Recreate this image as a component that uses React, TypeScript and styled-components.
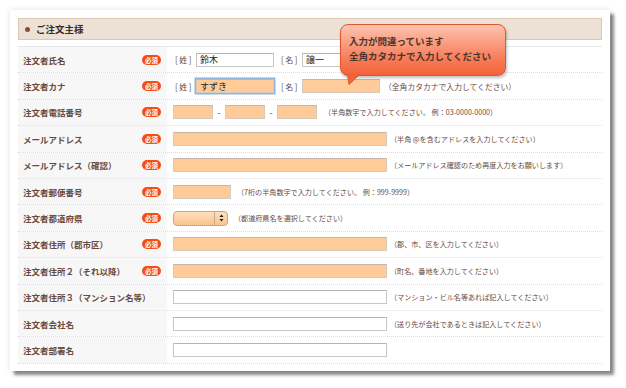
import React from 'react';
import styled, { createGlobalStyle } from 'styled-components';

const GlobalStyle = createGlobalStyle`
  html, body {
    margin: 0;
    padding: 0;
    background: #ffffff;
  }
  body {
    padding: 10px;
    font-family: "Noto Sans CJK JP", "Noto Sans", sans-serif;
  }
`;

const Card = styled.div`
  position: relative;
  width: 600px;
  box-sizing: border-box;
  padding: 8px 8px 7px 8px;
  background: #ffffff;
  box-shadow: 4px 4px 3px rgba(0, 0, 0, 0.45), 0 0 6px rgba(0, 0, 0, 0.12);
`;

const Header = styled.div`
  display: flex;
  align-items: center;
  gap: 6px;
  height: 22px;
  box-sizing: border-box;
  padding-left: 6px;
  background: #ede1d5;
  border: 1px solid #dcc8b6;
  font-size: 9.5px;
  font-weight: 700;
  color: #3b2a20;
`;

const Dot = styled.span`
  width: 5px;
  height: 5px;
  border-radius: 50%;
  background: #8f4c2c;
`;

const Table = styled.div`
  margin-top: 6px;
  border-top: 1px solid #e6e6e6;
`;

const Row = styled.div`
  display: grid;
  grid-template-columns: 149px 1fr;
  height: 25.4px;
  border-bottom: 1px dotted #dcdcdc;
`;

const LabelCell = styled.div`
  display: flex;
  align-items: center;
  justify-content: space-between;
  padding: 0 6px 0 5px;
  background: #f7f7f7;
  font-size: 8.5px;
  font-weight: 700;
  color: #6a4a3c;
`;

const Badge = styled.span`
  display: inline-flex;
  align-items: center;
  justify-content: center;
  width: 19px;
  height: 10px;
  border-radius: 5px;
  background: #f24d12;
  color: #ffffff;
  font-size: 6.5px;
  font-weight: 700;
`;

const FieldCell = styled.div`
  display: flex;
  align-items: center;
  padding-left: 6px;
  font-size: 8px;
  color: #6a4a3c;
`;

const Bracket = styled.span<{ $gap?: number }>`
  display: inline-flex;
  align-items: center;
  width: 19px;
  margin-left: ${p => p.$gap ?? 0}px;
  margin-right: 2px;
  padding-left: 2px;
  font-size: 8px;
  color: #6a4a3c;
  white-space: nowrap;

  & > b {
    font-weight: 400;
    margin: 0 1.5px;
  }
`;

const Input = styled.div<{ $w: number; $req?: boolean; $focus?: boolean }>`
  width: ${p => p.$w}px;
  height: 14px;
  box-sizing: border-box;
  padding-left: 3px;
  display: flex;
  align-items: center;
  background: ${p => (p.$req ? '#ffcc99' : '#ffffff')};
  border: 1px solid ${p => (p.$req ? '#d6c9bd' : '#c6c6c6')};
  border-top-color: ${p => (p.$req ? '#c4b6aa' : '#b4b4b4')};
  box-shadow: ${p => (p.$focus ? '0 0 0 1.5px #8fb4de' : 'none')};
  font-size: 9px;
  color: #222222;
`;

const Dash = styled.span`
  width: 12px;
  text-align: center;
  font-size: 9px;
  color: #6a4a3c;
`;

const Hint = styled.span<{ $gap?: number; $size?: number }>`
  margin-left: ${p => p.$gap ?? 4}px;
  font-size: ${p => p.$size ?? 7.1}px;
  color: #6a4a3c;
  white-space: nowrap;
`;

const Select = styled.div`
  width: 55px;
  height: 15px;
  box-sizing: border-box;
  border-radius: 4px;
  border: 1px solid #c7a68a;
  background: linear-gradient(#ffe0bf, #f8c48f);
  display: flex;
  justify-content: flex-end;
`;

const SelectArrows = styled.div`
  width: 12px;
  border-left: 1px solid #c7a68a;
  display: flex;
  align-items: center;
  justify-content: center;
`;

const Tooltip = styled.div`
  position: absolute;
  left: 330px;
  top: 14px;
  width: 166px;
  height: 52px;
  box-sizing: border-box;
  padding: 9px 0 0 8px;
  border-radius: 8px;
  border: 1px solid #e2542c;
  background: linear-gradient(#fdc3b0, #f77a55 70%, #f4623a);
  box-shadow: 1px 2px 3px rgba(0, 0, 0, 0.25);
  font-size: 9.5px;
  font-weight: 700;
  line-height: 15px;
  color: #4a3530;
`;

const Tail = styled.svg`
  position: absolute;
  left: 6px;
  bottom: -10px;
`;

type Field = {
  label: string;
  req: boolean;
  content: React.ReactNode;
};

const Br = ({ text, gap }: { text: string; gap?: number }) => (
  <Bracket $gap={gap}>
    [<b>{text}</b>]
  </Bracket>
);

const fields: Field[] = [
  {
    label: '注文者氏名',
    req: true,
    content: (
      <>
        <Br text="姓" />
        <Input $w={78}>鈴木</Input>
        <Br text="名" gap={5} />
        <Input $w={78}>譲一</Input>
      </>
    ),
  },
  {
    label: '注文者カナ',
    req: true,
    content: (
      <>
        <Br text="姓" />
        <Input $w={78} $req $focus>すずき</Input>
        <Br text="名" gap={5} />
        <Input $w={78} $req />
        <Hint $gap={4} $size={7.8}>（全角カタカナで入力してください）</Hint>
      </>
    ),
  },
  {
    label: '注文者電話番号',
    req: true,
    content: (
      <>
        <Input $w={40} $req />
        <Dash>-</Dash>
        <Input $w={40} $req />
        <Dash>-</Dash>
        <Input $w={40} $req />
        <Hint $gap={7}>（半角数字で入力してください。 例：03-0000-0000）</Hint>
      </>
    ),
  },
  {
    label: 'メールアドレス',
    req: true,
    content: (
      <>
        <Input $w={214} $req />
        <Hint $gap={3}>（半角 @を含むアドレスを入力してください）</Hint>
      </>
    ),
  },
  {
    label: 'メールアドレス（確認）',
    req: true,
    content: (
      <>
        <Input $w={214} $req />
        <Hint $gap={3}>（メールアドレス確認のため再度入力をお願いします）</Hint>
      </>
    ),
  },
  {
    label: '注文者郵便番号',
    req: true,
    content: (
      <>
        <Input $w={58} $req />
        <Hint $gap={6}>（7桁の半角数字で入力してください。 例：999-9999）</Hint>
      </>
    ),
  },
  {
    label: '注文者都道府県',
    req: true,
    content: (
      <>
        <Select>
          <SelectArrows>
            <svg width="5" height="8" viewBox="0 0 5 8">
              <path d="M2.5 0.5 L4.5 3 L0.5 3 Z M2.5 7.5 L4.5 5 L0.5 5 Z" fill="#222" />
            </svg>
          </SelectArrows>
        </Select>
        <Hint $gap={6}>（都道府県名を選択してください）</Hint>
      </>
    ),
  },
  {
    label: '注文者住所（郡市区）',
    req: true,
    content: (
      <>
        <Input $w={214} $req />
        <Hint $gap={3}>（郡、市、区を入力してください）</Hint>
      </>
    ),
  },
  {
    label: '注文者住所２（それ以降）',
    req: true,
    content: (
      <>
        <Input $w={214} $req />
        <Hint $gap={3}>（町名、番地を入力してください）</Hint>
      </>
    ),
  },
  {
    label: '注文者住所３（マンション名等）',
    req: false,
    content: (
      <>
        <Input $w={214} />
        <Hint $gap={3}>（マンション・ビル名等あれば記入してください）</Hint>
      </>
    ),
  },
  {
    label: '注文者会社名',
    req: false,
    content: (
      <>
        <Input $w={214} />
        <Hint $gap={3}>（送り先が会社であるときは記入してください）</Hint>
      </>
    ),
  },
  {
    label: '注文者部署名',
    req: false,
    content: <Input $w={214} />,
  },
];

const App = () => {
  return (
    <>
      <GlobalStyle />
      <Card>
        <Header>
          <Dot />
          ご注文主様
        </Header>
        <Table>
          {fields.map(f => (
            <Row key={f.label}>
              <LabelCell>
                <span>{f.label}</span>
                {f.req && <Badge>必須</Badge>}
              </LabelCell>
              <FieldCell>{f.content}</FieldCell>
            </Row>
          ))}
        </Table>
        <Tooltip>
          入力が間違っています
          <br />
          全角カタカナで入力してください
          <Tail width="14" height="11" viewBox="0 0 14 11">
            <path d="M0.5 0 L2 10.5 L13 0" fill="#f4623a" stroke="#e2542c" strokeWidth="1" />
            <rect x="1" y="-1" width="12" height="1.6" fill="#f4623a" />
          </Tail>
        </Tooltip>
      </Card>
    </>
  );
};

export default App;
